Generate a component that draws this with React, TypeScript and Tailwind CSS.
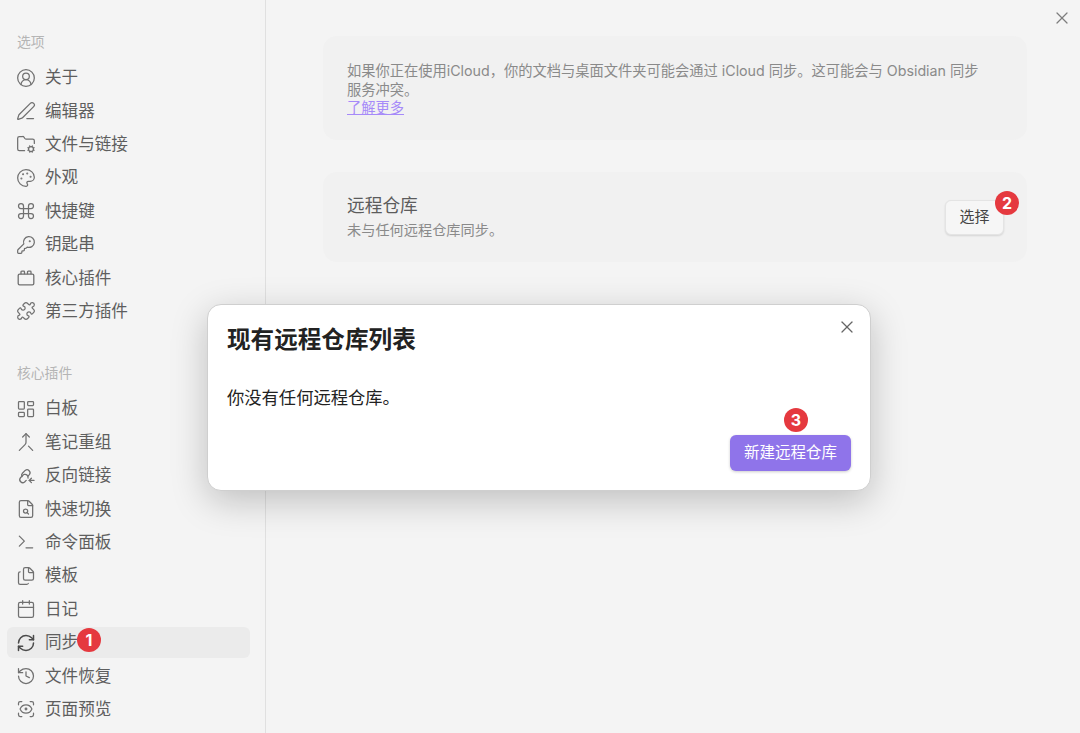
import type { ReactNode } from "react";
import {
  CircleUserRound,
  PenLine,
  FolderCog,
  Palette,
  Command,
  KeyRound,
  Puzzle,
  LayoutDashboard,
  Merge,
  FileSearch,
  Terminal,
  Files,
  Calendar,
  RefreshCw,
  History,
  ScanEye,
  X,
} from "lucide-react";

const iconClass = "w-5 h-5 shrink-0 text-[#707070]";
const sw = 1.5;

function CorePluginIcon() {
  return (
    <svg viewBox="-1 -1 20 20" fill="none" stroke="currentColor" strokeWidth="1.3" strokeLinejoin="round" className={iconClass}>
      <rect x="1.2" y="5.2" width="15.6" height="10.6" rx="1.4" />
      <path d="M4 5.2V3c0-.5.3-.8.8-.8h1.9c.5 0 .8.3.8.8v2.2M10.5 5.2V3c0-.5.3-.8.8-.8h1.9c.5 0 .8.3.8.8v2.2" />
    </svg>
  );
}

function BacklinkIcon() {
  return (
    <svg viewBox="-1 -1 20 20" fill="none" stroke="currentColor" strokeWidth="1.3" strokeLinecap="round" strokeLinejoin="round" className={iconClass}>
      <path d="M6.6 7.6 3.4 10.8a3 3 0 0 0 4.2 4.2l1.6-1.6" />
      <path d="M5 9.6a3 3 0 0 1 .4-3.4l2.8-2.8a3 3 0 0 1 4.2 4.2l-1.4 1.4" />
      <path d="M7.4 7.4a3 3 0 0 1 3.6 3.6" />
      <path d="M17 13.4h-5M14.4 11.2l-2.2 2.2 2.2 2.2" />
    </svg>
  );
}

const optionItems: [ReactNode, string][] = [
  [<CircleUserRound className={iconClass} strokeWidth={sw} />, "关于"],
  [<PenLine className={iconClass} strokeWidth={sw} />, "编辑器"],
  [<FolderCog className={iconClass} strokeWidth={sw} />, "文件与链接"],
  [<Palette className={iconClass} strokeWidth={sw} />, "外观"],
  [<Command className={iconClass} strokeWidth={sw} />, "快捷键"],
  [<KeyRound className={iconClass} strokeWidth={sw} />, "钥匙串"],
  [<CorePluginIcon />, "核心插件"],
  [<Puzzle className={iconClass} strokeWidth={sw} />, "第三方插件"],
];

const pluginItems: [ReactNode, string][] = [
  [<LayoutDashboard className={iconClass} strokeWidth={sw} />, "白板"],
  [<Merge className={iconClass} strokeWidth={sw} />, "笔记重组"],
  [<BacklinkIcon />, "反向链接"],
  [<FileSearch className={iconClass} strokeWidth={sw} />, "快速切换"],
  [<Terminal className={iconClass} strokeWidth={sw} />, "命令面板"],
  [<Files className={iconClass} strokeWidth={sw} />, "模板"],
  [<Calendar className={iconClass} strokeWidth={sw} />, "日记"],
  [<RefreshCw className="w-5 h-5 shrink-0 text-[#4a4a4a]" strokeWidth={1.8} />, "同步"],
  [<History className={iconClass} strokeWidth={sw} />, "文件恢复"],
  [<ScanEye className={iconClass} strokeWidth={sw} />, "页面预览"],
];

function Badge({ n, className }: { n: number; className: string }) {
  return (
    <span className={"absolute w-6 h-6 rounded-full bg-[#e5393f] text-white text-[16px] font-bold leading-6 text-center " + className}>
      {n}
    </span>
  );
}

function NavRow({ icon, label }: { icon: ReactNode; label: string }) {
  const active = label === "同步";
  return (
    <div className={"relative flex items-center gap-[9px] pl-[9px] rounded-md text-[16.6px] text-[#5e5e5e] " + (active ? "h-[31.4px] my-[1px] bg-[#ebebeb]" : "h-[33.4px]")}>
      {icon}
      <span>{label}</span>
      {active && <Badge n={1} className="left-[70px] top-[1px]" />}
    </div>
  );
}

export default function App() {
  return (
    <div className="relative h-[733px] w-[1080px] overflow-hidden flex bg-[#f4f4f4] font-['Inter','Noto_Sans_CJK_SC',sans-serif]">
      <aside className="w-[266px] shrink-0 border-r border-[#e0e0e0] pl-[7px] pr-[15px] pt-[33px]">
        <div className="text-[13.8px] leading-[18px] text-[#b5b5b5] pl-[10px] mb-[10px]">选项</div>
        {optionItems.map(([icon, label]) => (
          <NavRow key={label} icon={icon} label={label} />
        ))}
        <div className="text-[13.8px] leading-[18px] text-[#b5b5b5] pl-[10px] mt-[36px] mb-[10px]">核心插件</div>
        {pluginItems.map(([icon, label]) => (
          <NavRow key={label} icon={icon} label={label} />
        ))}
      </aside>

      <main className="flex-1 pl-[57px] pr-[53px] pt-[36px]">
        <section className="h-[104px] rounded-[14px] bg-[#f1f1f1] pl-[24px] pr-[24px] pt-[26px] text-[14.25px] leading-[18.5px] text-[#8a8a8a]">
          <p className="w-[640px]">
            如果你正在使用iCloud，你的文档与桌面文件夹可能会通过 iCloud 同步。这可能会与 Obsidian 同步服务冲突。
          </p>
          <a className="block text-[#a68af9] underline w-fit">了解更多</a>
        </section>

        <section className="mt-[32px] h-[90px] rounded-[14px] bg-[#f1f1f1] pl-[24px] pr-[23px] flex items-center justify-between">
          <div className="mb-[2px]">
            <div className="text-[17.7px] leading-[24px] text-[#5c5c5c]">远程仓库</div>
            <div className="text-[14.2px] leading-[18px] text-[#8a8a8a] mt-[3px]">未与任何远程仓库同步。</div>
          </div>
          <div className="relative">
            <button className="w-[59px] h-[35px] rounded-md bg-[#f6f6f6] border border-[#e4e4e4] shadow-[0_1px_2px_rgba(0,0,0,0.12)] text-[15px] text-[#444]">
              选择
            </button>
            <Badge n={2} className="left-[50px] top-[-9px]" />
          </div>
        </section>
      </main>

      <X className="absolute right-[8px] top-[8px] w-5 h-5 text-[#7d7d7d]" strokeWidth={1.5} />

      <div className="absolute left-[207px] top-[304px] w-[664px] h-[187px] rounded-[14px] bg-white border border-[#cfcfcf] shadow-[0_10px_36px_rgba(0,0,0,0.22)] pl-[19px] pr-[19px] pt-[19px]">
        <X className="absolute right-[13px] top-[12px] w-5 h-5 text-[#666]" strokeWidth={1.5} />
        <h2 className="text-[23.6px] leading-[32px] font-bold text-[#222]">现有远程仓库列表</h2>
        <p className="mt-[30px] text-[17.3px] leading-[24px] text-[#222]">你没有任何远程仓库。</p>
        <div className="flex justify-end mt-[25px]">
          <div className="relative">
            <button className="w-[121px] h-[36px] rounded-md bg-[#8f74ea] shadow-[0_1px_3px_rgba(0,0,0,0.2)] text-[15.5px] text-white">
              新建远程仓库
            </button>
            <Badge n={3} className="left-[54px] top-[-27px]" />
          </div>
        </div>
      </div>
    </div>
  );
}
